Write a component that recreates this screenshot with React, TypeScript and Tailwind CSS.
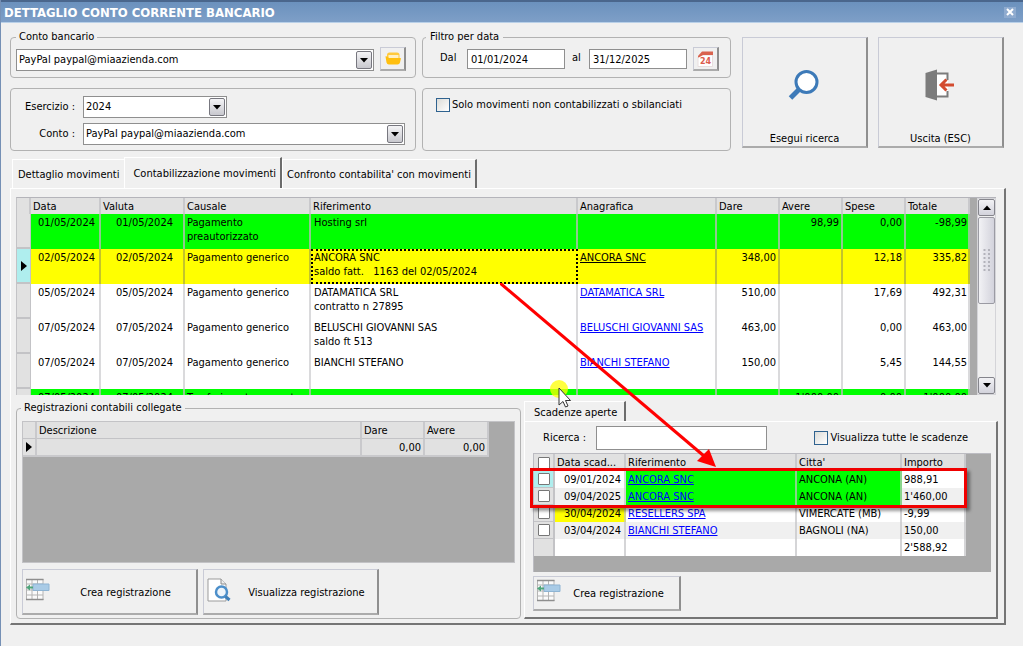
import { useState, type ReactNode } from "react";

const raised =
  "border-t border-l border-t-[#c9cbd6] border-l-[#c9cbd6] border-r-2 border-b-2 border-r-[#8f8f8f] border-b-[#ababab] bg-[#f0f0f0]";
const group = "min-w-0 rounded-[4px] border border-[#b2b2b2]";
const field = "border border-[#8f8f8f] bg-white px-[3px] text-black outline-none";

function ArrowBox() {
  return (
    <span className="pointer-events-none absolute top-[2px] right-[2px] flex h-[18px] w-4 items-center justify-center rounded-[2px] border border-[#77777f] bg-linear-to-b from-[#f4f4f6] to-[#c8c8ce]">
      <svg width="8" height="5" viewBox="0 0 8 5">
        <path d="M0 0H8L4 4.5Z" fill="#000" />
      </svg>
    </span>
  );
}

function Combo({ id, value, label, className }: { id: string; value: string; label?: string; className: string }) {
  return (
    <div className={"relative " + className}>
      <select id={id} aria-label={label} className="block h-[22px] w-full appearance-none border border-[#8f8f8f] bg-white pr-5 pl-[2px] text-black outline-none">
        <option>{value}</option>
      </select>
      <ArrowBox />
    </div>
  );
}

function Check({ id, label, small }: { id?: string; label?: string; small?: boolean }) {
  return (
    <input
      type="checkbox"
      id={id}
      aria-label={label}
      className={
        small
          ? "block size-3 shrink-0 appearance-none rounded-[1px] border border-[#777777] bg-white checked:bg-[#2b5f9b]"
          : "block size-[14px] shrink-0 appearance-none border border-[#2f628f] bg-linear-to-br from-[#dcdcd8] to-white checked:bg-[#2b5f9b]"
      }
    />
  );
}

function FolderIcon() {
  return (
    <svg width="18" height="16" viewBox="0 0 18 16">
      <path d="M3 4Q3 1.500 5.500 1.500H13Q15.500 1.500 15.500 4V8H3Z" fill="#ffc93c" />
      <path d="M4.500 4H14.500V7H4.500Z" fill="#fff0c4" />
      <path d="M1.500 5.500Q1.500 5 3 5.500L5 7H16.500Q17 7 16.800 8L16 11.500Q15.500 13.500 13.500 13.500H5Q3 13.500 2.500 11.500Z" fill="#ffbf0f" />
    </svg>
  );
}

function CalendarIcon() {
  return (
    <svg width="18" height="18" viewBox="0 0 18 18">
      <path d="M1 6H15V16H1Z" fill="#fff" />
      <path d="M1 6L5 1.500H16V5H6L1 8Z" fill="#d9634f" />
      <path d="M1 7V16.500H15.500V5" fill="none" stroke="#e8dede" strokeWidth="1" />
      <text x="8.500" y="13.500" textAnchor="middle" fontSize="8" fontWeight="700" fontFamily="DejaVu Sans, sans-serif" fill="#dc5c4c">
        24
      </text>
    </svg>
  );
}

function GridIcon() {
  return (
    <svg width="24" height="24" viewBox="0 0 24 24" className="shrink-0">
      <path d="M.5 1.500H17V22H.5Z" fill="#fafafa" />
      <path d="M.5 1V22M6 1V22M11.500 1V22M17 1V22M.5 12H17M.5 17H17M.5 6H17" stroke="#b4b4b4" fill="none" />
      <path d="M0 1.500H17.500M0 21.500H17.500" stroke="#8e8e8e" strokeWidth="1.500" />
      <path d="M7 6H23V12.500H7Z" fill="#a9cbe6" stroke="#8eb4d3" />
      <path d="M0 9.500L4 6.500V8.500H7V10.500H4V12.500Z" fill="#4fa57c" />
    </svg>
  );
}

function DocSearchIcon() {
  return (
    <svg width="24" height="24" viewBox="0 0 24 24" className="shrink-0">
      <path d="M1 1H14L19 6V23H1Z" fill="#fff" stroke="#9b9b9b" />
      <path d="M14 1V6H19" fill="#eee" stroke="#8a8a8a" />
      <circle cx="14.500" cy="14" r="5.500" fill="#eef5fb" stroke="#4c8fca" strokeWidth="2.500" />
      <path d="M18.500 18.500L22.500 22" stroke="#3f7fb8" strokeWidth="3" />
    </svg>
  );
}

const columns = ["Data", "Valuta", "Causale", "Riferimento", "Anagrafica", "Dare", "Avere", "Spese", "Totale"];

type Mov = { date: string; causale: string; rif: string[]; ana: string; dare: string; avere: string; spese: string; tot: string; tone: "green" | "yellow" | "white" };
const movements: Mov[] = [
  { date: "01/05/2024", causale: "Pagamento preautorizzato", rif: ["Hosting srl"], ana: "", dare: "", avere: "98,99", spese: "0,00", tot: "-98,99", tone: "green" },
  { date: "02/05/2024", causale: "Pagamento generico", rif: ["ANCORA SNC", "saldo fatt.   1163 del 02/05/2024"], ana: "ANCORA SNC", dare: "348,00", avere: "", spese: "12,18", tot: "335,82", tone: "yellow" },
  { date: "05/05/2024", causale: "Pagamento generico", rif: ["DATAMATICA SRL", "contratto n 27895"], ana: "DATAMATICA SRL", dare: "510,00", avere: "", spese: "17,69", tot: "492,31", tone: "white" },
  { date: "07/05/2024", causale: "Pagamento generico", rif: ["BELUSCHI GIOVANNI SAS", "saldo ft 513"], ana: "BELUSCHI GIOVANNI SAS", dare: "463,00", avere: "", spese: "0,00", tot: "463,00", tone: "white" },
  { date: "07/05/2024", causale: "Pagamento generico", rif: ["BIANCHI STEFANO"], ana: "BIANCHI STEFANO", dare: "150,00", avere: "", spese: "5,45", tot: "144,55", tone: "white" },
  { date: "07/05/2024", causale: "Trasferimento su conto", rif: [""], ana: "", dare: "", avere: "1'000,00", spese: "0,00", tot: "1'000,00", tone: "green" },
];
const tones = { green: "bg-[#00ff00]", yellow: "bg-[#ffff00]", white: "bg-white" };
const rules = { green: "border-r-[#8fc98f]", yellow: "border-r-[#c3c32c]", white: "border-r-[#dadadc]" };

const headCell = "border-r-2 border-r-[#c9c9cc] bg-[#e1e1e1] text-left font-normal whitespace-nowrap";

function RowPointer() {
  return (
    <svg width="6" height="10" viewBox="0 0 6 10" className="mx-auto block">
      <path d="M0 0L6 5L0 10Z" fill="#000" />
    </svg>
  );
}

function MovementsTable() {
  return (
    <div className="mr-[2px] flex h-[198px] overflow-hidden border-t border-l border-t-[#b4b4ba] border-l-[#c3c3c6] bg-[#a9a9a9]">
      <table className="h-min flex-1 table-fixed border-separate border-spacing-0">
        <colgroup>
          <col className="w-[14px]" />
          <col className="w-[70px]" />
          <col className="w-[84px]" />
          <col className="w-[126px]" />
          <col />
          <col className="w-[139px]" />
          <col className="w-[63px]" />
          <col className="w-[63px]" />
          <col className="w-[63px]" />
          <col className="w-[64px]" />
        </colgroup>
        <thead>
          <tr className="h-[16px]">
            <th className={headCell} aria-label="Riga" />
            {columns.map((c) => (
              <th key={c} className={headCell + " pt-[2px] pl-[2px] leading-[14px]"}>{c}</th>
            ))}
          </tr>
        </thead>
        <tbody>
          {movements.map((m, i) => {
            const cell = "border-r-2 pt-[2px] align-top leading-[14px] " + rules[m.tone];
            return (
              <tr key={i} className={"h-[35px] " + tones[m.tone]}>
                <td className={(m.tone === "yellow" ? "bg-[#afeeee]" : "bg-[#e1e1e1]") + " border-r border-b-2 border-[#c3c3c6] p-0"}>
                  {m.tone === "yellow" && <RowPointer />}
                </td>
                <td className={cell + " pr-1 text-right"}>{m.date}</td>
                <td className={cell + " pr-[10px] text-right"}>{m.date}</td>
                <td className={cell + " pl-[2px] " + (i === 5 ? "whitespace-nowrap" : "")}>{m.causale}</td>
                <td className={m.tone === "yellow" ? "border-2 border-dotted border-black pl-px align-top leading-[14px] whitespace-pre" : cell + " pl-[3px] whitespace-pre"}>
                  {m.rif.map((r) => <div key={r}>{r}</div>)}
                </td>
                <td className={cell + " pl-[2px] whitespace-nowrap"}>
                  {m.ana && <a href="#" className={m.tone === "yellow" ? "underline" : "text-[#0000ff] underline"}>{m.ana}</a>}
                </td>
                <td className={cell + " pr-[2px] text-right"}>{m.dare}</td>
                <td className={cell + " pr-[2px] text-right"}>{m.avere}</td>
                <td className={cell + " pr-[2px] text-right"}>{m.spese}</td>
                <td className={cell + " pr-px text-right"}>{m.tot}</td>
              </tr>
            );
          })}
        </tbody>
      </table>
      <div className="w-[7px] shrink-0" />
      <div className="flex w-[19px] shrink-0 flex-col border border-[#d4d4d8] bg-[#f0f0f0]">
        <button aria-label="Scorri su" className="flex h-[17px] items-center justify-center rounded-[2px] border border-[#85858c] bg-linear-to-b from-[#f2f2f5] to-[#d3d3dc]">
          <svg width="8" height="5" viewBox="0 0 8 5"><path d="M0 5H8L4 .5Z" fill="#000" /></svg>
        </button>
        <div className="mt-px flex h-[87px] items-center justify-center rounded-[2px] border border-[#9b9ba3] bg-linear-to-r from-[#f2f2f5] to-[#d3d3dc]">
          <svg width="8" height="24" viewBox="0 0 8 24">
            <path d="M1.500 0V24M6 0V24" stroke="#b3b3bb" strokeWidth="2" strokeDasharray="2 2" />
          </svg>
        </div>
        <div className="flex-1" />
        <button aria-label="Scorri giù" className="flex h-[17px] items-center justify-center rounded-[2px] border border-[#85858c] bg-linear-to-b from-[#f2f2f5] to-[#d3d3dc]">
          <svg width="8" height="5" viewBox="0 0 8 5"><path d="M0 0H8L4 4.500Z" fill="#000" /></svg>
        </button>
      </div>
    </div>
  );
}

const dues = [
  { date: "09/01/2024", rif: "ANCORA SNC", city: "ANCONA (AN)", amount: "988,91", match: true, late: false },
  { date: "09/04/2025", rif: "ANCORA SNC", city: "ANCONA (AN)", amount: "1'460,00", match: true, late: false },
  { date: "30/04/2024", rif: "RESELLERS SPA", city: "VIMERCATE (MB)", amount: "-9,99", match: false, late: true },
  { date: "03/04/2024", rif: "BIANCHI STEFANO", city: "BAGNOLI (NA)", amount: "150,00", match: false, late: false },
];

function DuesTable() {
  const cell = "border-r-2 border-r-[#c3c3c6]/70 pl-[2px] whitespace-nowrap";
  return (
    <div className="relative h-[119px] border-t border-l border-[#bcbcc2] bg-[#a9a9a9] pr-[25px]">
      <table className="w-full table-fixed border-separate border-spacing-0 leading-[14px]">
        <colgroup>
          <col className="w-[21px]" />
          <col className="w-[71px]" />
          <col />
          <col className="w-[105px]" />
          <col className="w-[64px]" />
        </colgroup>
        <thead>
          <tr className="h-[17px]">
            <th className={headCell + " pl-1"}><Check small label="Seleziona tutte" /></th>
            {["Data scad...", "Riferimento", "Citta'", "Importo"].map((c) => (
              <th key={c} className={headCell + " pl-[2px]"}>{c}</th>
            ))}
          </tr>
        </thead>
        <tbody>
          {dues.map((d, i) => (
            <tr key={i} className={i % 2 ? "h-[17px] bg-[#f0f0f0]" : "h-[17px] bg-white"}>
              <td className={(i === 0 ? "bg-[#afeeee]" : "bg-[#e1e1e1]") + " border-r-2 border-b border-[#c3c3c6] pl-1"}>
                <Check small label={"Seleziona " + d.rif + " " + d.date} />
              </td>
              <td className={cell + " pr-[3px] text-right " + (d.late ? "bg-[#ffff00]" : "")}>{d.date}</td>
              <td className={cell + (d.match ? " bg-[#00ff00]" : "")}>
                <a href="#" className="text-[#0000ff] underline">{d.rif}</a>
              </td>
              <td className={cell + (d.match ? " bg-[#00ff00]" : "")}>{d.city}</td>
              <td className={cell}>{d.amount}</td>
            </tr>
          ))}
          <tr className="h-[17px] bg-white">
            <td className="border-r-2 border-[#c3c3c6] bg-[#e1e1e1]" />
            <td className={cell} />
            <td className={cell} />
            <td className={cell} />
            <td className={cell}>2'588,92</td>
          </tr>
        </tbody>
      </table>
      <div className="pointer-events-none absolute top-[14px] right-[24px] -left-[4px] h-[40px] border-[3px] border-[#f00000] shadow-[3px_3px_3px_rgba(0,0,0,0.4)]" />
    </div>
  );
}

function Tab({ active, first, onClick, children }: { active: boolean; first?: boolean; onClick?: () => void; children: ReactNode }) {
  return (
    <button
      role="tab"
      aria-selected={active}
      onClick={onClick}
      className={
        "border-t border-l border-white whitespace-nowrap " +
        (active
          ? "h-[31px] border-r-2 border-r-[#6c6c6c] pt-[2px] pr-1 pl-2"
          : first
            ? "h-[29px] px-[5px] pt-[2px]"
            : "h-[29px] border-r-2 border-r-[#6c6c6c] px-1 pt-[2px]")
      }
    >
      {children}
    </button>
  );
}

export default function App() {
  const [tab, setTab] = useState(1);
  return (
    <div className="flex min-h-screen flex-col border-l border-[#7590b5] bg-[#f0f0f0] font-['DejaVu_Sans_Condensed','Noto_Sans',sans-serif] text-[11px] leading-[14px] text-black">
      <header className="flex h-[23px] items-center justify-between border-t-2 border-t-[#4a668c] border-b border-b-[#b9d0e8] bg-linear-to-b from-[#6b91bd] to-[#7e9fc7] pr-[7px] pl-[3px]">
        <h1 className="pt-[2px] text-[13px] font-bold text-white">DETTAGLIO CONTO CORRENTE BANCARIO</h1>
        <button aria-label="Chiudi" className="flex h-[11px] w-3 items-center justify-center bg-[#8fabcf]">
          <svg width="8" height="8" viewBox="0 0 8 8"><path d="M1 1L7 7M7 1L1 7" stroke="#fff" strokeWidth="2" /></svg>
        </button>
      </header>

      <main className="flex flex-1 flex-col pt-[7px] pl-[9px]">
        <section className="mr-[19px] flex">
          <div className="mr-[6px] flex min-w-0 flex-[406] flex-col gap-[10px]">
            <fieldset className={group + " flex gap-[6px] px-[5px] pt-[5px] pb-[6px]"}>
              <legend className="px-[3px]">Conto bancario</legend>
              <Combo id="banca" label="Conto bancario" value="PayPal paypal@miaazienda.com" className="min-w-0 flex-1" />
              <button aria-label="Apri conto" className={raised + " -mt-[2px] mr-[4px] flex h-6 w-[26px] items-center justify-center"}>
                <FolderIcon />
              </button>
            </fieldset>
            <div className={group + " grid grid-cols-[64px_1fr] items-center gap-x-2 gap-y-[5px] pt-[7px] pr-[10px] pb-[5px]"}>
              <label htmlFor="esercizio" className="text-right">Esercizio :</label>
              <Combo id="esercizio" value="2024" className="w-[144px]" />
              <label htmlFor="conto" className="text-right">Conto :</label>
              <Combo id="conto" value="PayPal paypal@miaazienda.com" className="min-w-0" />
            </div>
          </div>
          <div className="mr-[11px] flex min-w-0 flex-[309] flex-col gap-[10px]">
            <fieldset className={group + " flex px-[11px] pt-[5px] pb-[6px]"}>
              <legend className="-ml-2 px-1">Filtro per data</legend>
              <label htmlFor="dal" className="w-[33px] pt-[2px] pl-[6px]">Dal</label>
              <input id="dal" defaultValue="01/01/2024" className={field + " h-5 min-w-0 flex-1"} />
              <label htmlFor="al" className="w-6 pt-[2px] pl-[7px]">al</label>
              <input id="al" defaultValue="31/12/2025" className={field + " h-5 min-w-0 flex-1"} />
              <button aria-label="Calendario" className={raised + " -mt-[2px] ml-[6px] flex h-6 w-[26px] items-center justify-center"}>
                <CalendarIcon />
              </button>
            </fieldset>
            <div className={group + " flex flex-1 items-start gap-[2px] pt-[9px] pl-[13px]"}>
              <Check id="solo" />
              <label htmlFor="solo">Solo movimenti non contabilizzati o sbilanciati</label>
            </div>
          </div>
          <div className="mt-[7px] mb-[3px] flex flex-[262] gap-[10px]">
            <button className={raised + " flex flex-1 flex-col items-center justify-end"}>
              <svg width="34" height="34" viewBox="0 0 34 34" className="mb-[30px]">
                <circle cx="18.500" cy="14" r="10.500" fill="#fff" stroke="#3d7ab8" strokeWidth="3" />
                <path d="M11 21.500L2.500 30" stroke="#3d7ab8" strokeWidth="5" />
              </svg>
              <span>Esegui ricerca</span>
            </button>
            <button className={raised + " flex flex-1 flex-col items-center justify-end"}>
              <svg width="34" height="34" viewBox="0 0 34 34" className="mb-[30px]">
                <path d="M13 6H24V28H13Z" fill="#fff" />
                <path d="M13 5.500H23.500V12M23.500 23V28.500H13" fill="none" stroke="#7c7c7c" strokeWidth="2" />
                <path d="M1.500 5L13 1.500V32.500L1.500 29Z" fill="#7c7c7c" />
                <path d="M30 17H17M22.500 11.500L17 17L22.500 22.500" fill="none" stroke="#d34b2f" strokeWidth="3" />
              </svg>
              <span>Uscita (ESC)</span>
            </button>
          </div>
        </section>

        <div role="tablist" className="mt-[6px] flex items-end pl-[2px]">
          <Tab active={tab === 0} first onClick={() => setTab(0)}>Dettaglio movimenti</Tab>
          <Tab active={tab === 1} onClick={() => setTab(1)}>Contabilizzazione movimenti</Tab>
          <Tab active={tab === 2} onClick={() => setTab(2)}>Confronto contabilita' con movimenti</Tab>
        </div>

        <section className="relative mr-[17px] border-t border-r-2 border-b-2 border-l border-t-white border-r-[#757575] border-b-[#757575] border-l-white pt-2 pr-[6px] pb-1 pl-[5px]">
          <MovementsTable />

          <div className="mt-[6px] grid grid-cols-[505fr_474fr] gap-[3px]">
            <fieldset className={group + " flex flex-col px-[5px] pt-[6px] pb-[3px]"}>
              <legend className="-ml-px px-[3px]">Registrazioni contabili collegate</legend>
              <div className="h-[142px] border border-[#c3c3c6] bg-[#a9a9a9] pr-[25px]">
                <table className="w-full table-fixed border-separate border-spacing-0 bg-[#e1e1e1]">
                  <colgroup>
                    <col className="w-[14px]" />
                    <col />
                    <col className="w-[63px]" />
                    <col className="w-[64px]" />
                  </colgroup>
                  <thead>
                    <tr className="h-[17px]">
                      <th className={headCell + " border-b border-b-[#c3c3c6]"} aria-label="Riga" />
                      {["Descrizione", "Dare", "Avere"].map((c) => (
                        <th key={c} className={headCell + " border-b border-b-[#c3c3c6] pt-[2px] pl-[2px]"}>{c}</th>
                      ))}
                    </tr>
                  </thead>
                  <tbody>
                    <tr className="h-[18px]">
                      <td className="border-r-2 border-b-2 border-[#c9c9cc]"><RowPointer /></td>
                      <td className="border-r-2 border-b-2 border-[#c9c9cc]" />
                      <td className="border-r-2 border-b-2 border-[#c9c9cc] pt-[2px] pr-[2px] text-right">0,00</td>
                      <td className="border-r-2 border-b-2 border-[#c9c9cc] pt-[2px] pr-[2px] text-right">0,00</td>
                    </tr>
                  </tbody>
                </table>
              </div>
              <div className="mt-[6px] flex gap-[5px]">
                <button className={raised + " flex h-[46px] w-[176px] items-center px-[3px] pb-1"}>
                  <GridIcon />
                  <span className="flex-1 pt-[6px] pl-2">Crea registrazione</span>
                </button>
                <button className={raised + " flex h-[46px] w-[176px] items-center px-[3px] pb-1"}>
                  <DocSearchIcon />
                  <span className="flex-1 pt-[6px] pl-2">Visualizza registrazione</span>
                </button>
              </div>
            </fieldset>

            <div className="flex min-w-0 flex-col">
              <div role="tablist" className="flex">
                <button role="tab" aria-selected="true" className="h-5 border-t border-r-2 border-l border-t-white border-r-[#6c6c6c] border-l-white pt-[3px] pr-[7px] pl-[9px]">
                  Scadenze aperte
                </button>
              </div>
              <div className="flex-1 border-t border-r-2 border-b-2 border-l border-t-white border-r-[#757575] border-b-[#757575] border-l-white pt-1 pr-[5px] pl-2">
                <div className="mb-[3px] flex items-center">
                  <label htmlFor="ricerca" className="w-[63px] pl-[10px] whitespace-nowrap">Ricerca :</label>
                  <input id="ricerca" className={field + " h-6 w-[171px]"} />
                  <span className="flex-1" />
                  <Check id="tutte" />
                  <label htmlFor="tutte" className="mr-[23px] ml-[2px] whitespace-nowrap">Visualizza tutte le scadenze</label>
                </div>
                <DuesTable />
                <button className={raised + " mt-1 flex h-[35px] w-[148px] items-center px-[3px] pb-1"}>
                  <GridIcon />
                  <span className="flex-1 pt-[6px]">Crea registrazione</span>
                </button>
              </div>
            </div>
          </div>

          <svg className="pointer-events-none absolute top-[94px] left-[489px]" width="220" height="188" viewBox="0 0 220 188">
            <path d="M0 0L204 173" stroke="#ff0000" strokeWidth="3" />
            <path d="M216 184L197 178L209 166Z" fill="#ff0000" />
          </svg>
          <svg className="pointer-events-none absolute top-[189px] left-[538px]" width="24" height="32" viewBox="0 0 24 32">
            <circle cx="10" cy="11" r="9" fill="#ffff00" fillOpacity=".75" />
            <path d="M10 10V27L14 23.500L16.500 29L19 28L16.500 22.500H21.500Z" fill="#fff" stroke="#333" />
          </svg>
        </section>
      </main>
    </div>
  );
}
